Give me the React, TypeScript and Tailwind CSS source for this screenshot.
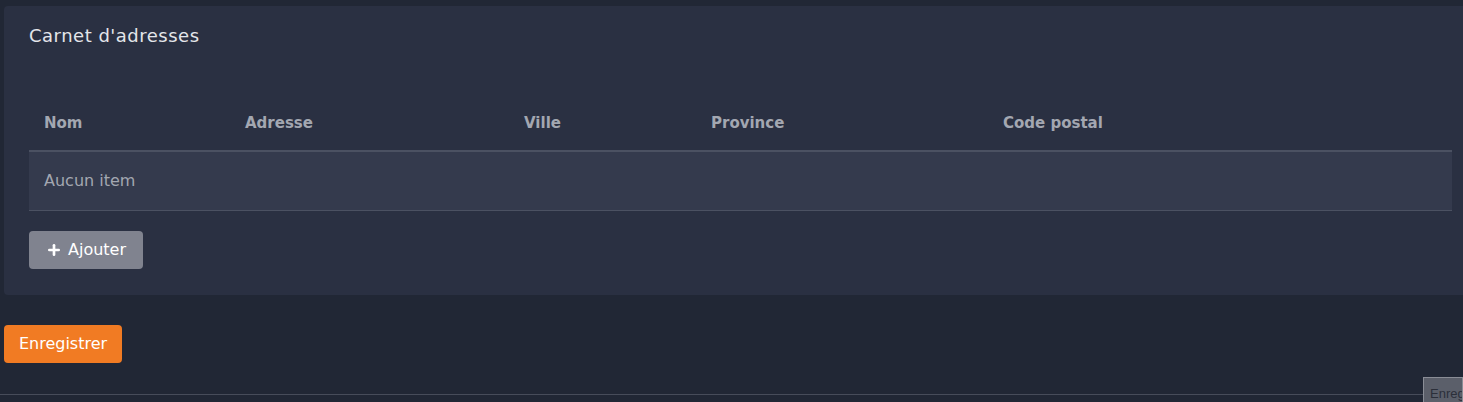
import { Plus } from "lucide-react";

const columns = [
  { label: "Nom", w: "w-[201px]" },
  { label: "Adresse", w: "w-[279px]" },
  { label: "Ville", w: "w-[187px]" },
  { label: "Province", w: "w-[292px]" },
  { label: "Code postal", w: "" },
];

export default function App() {
  return (
    <div className="relative min-h-[402px] w-full overflow-hidden bg-[#212735] font-['DejaVu_Sans',sans-serif]">
      <div className="pl-[4px] pt-[6px]">
        {/* Address book card */}
        <section className="rounded-l-[4px] bg-[#2a3042] px-[25px] pb-[26px] pt-[17px]">
          <h2 className="text-[18px] leading-[26px] tracking-[0.5px] text-[#e4e6ea]">Carnet d'adresses</h2>

          <table className="mt-[45px] w-[1423px] border-collapse text-left">
            <thead>
              <tr className="h-[57px] border-b-2 border-[#4b5162]">
                {columns.map((c) => (
                  <th key={c.label} className={`${c.w} pl-[15px] pt-[2px] text-[15px] font-bold text-[#a3a7b1]`}>
                    {c.label}
                  </th>
                ))}
              </tr>
            </thead>
            <tbody>
              <tr className="h-[59px] border-b border-[#4b5162] bg-[#343a4d]">
                <td colSpan={5} className="pl-[15px] text-[16px] text-[#a3a7b1]">
                  Aucun item
                </td>
              </tr>
            </tbody>
          </table>

          <button
            type="button"
            className="mt-[20px] inline-flex h-[38px] w-[114px] items-center justify-center gap-[6px] rounded-[4px] bg-[#80838f] text-[16px] text-white"
          >
            <Plus className="h-[16px] w-[16px]" strokeWidth={4} />
            Ajouter
          </button>
        </section>

        <button
          type="button"
          className="mt-[30px] inline-flex h-[38px] w-[118px] items-center justify-center rounded-[4px] bg-[#f17b23] text-[16px] text-white"
        >
          Enregistrer
        </button>
      </div>

      <div className="absolute left-0 top-[394px] h-px w-[1423px] bg-[#474c5a]" />

      {/* native tooltip peeking in */}
      <div className="absolute left-[1423px] top-[377px] h-[30px] w-[40px] overflow-hidden whitespace-nowrap border border-[#8a8d96] bg-[#5b5f6a] pl-[6px] pt-[6px] font-['Liberation_Sans',sans-serif] text-[13px] text-[#2b2f3a]">
        Enreg
      </div>
    </div>
  );
}
